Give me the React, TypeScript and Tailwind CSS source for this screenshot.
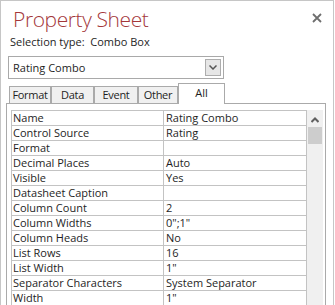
import React from "react";

const rows: [string, string][] = [
  ["Name", "Rating Combo"],
  ["Control Source", "Rating"],
  ["Format", ""],
  ["Decimal Places", "Auto"],
  ["Visible", "Yes"],
  ["Datasheet Caption", ""],
  ["Column Count", "2"],
  ["Column Widths", "0\";1\""],
  ["Column Heads", "No"],
  ["List Rows", "16"],
  ["List Width", "1\""],
  ["Separator Characters", "System Separator"],
  ["Width", "1\""],
];

const tabs = [
  { label: "Format", w: "w-[42px]" },
  { label: "Data", w: "w-[43px]" },
  { label: "Event", w: "w-[44px]" },
  { label: "Other", w: "w-[40px]" },
];

export default function App() {
  return (
    <div
      className="w-[335px] h-[305px] bg-white overflow-hidden text-[#1e1e1e]"
      style={{ fontFamily: '"Open Sans", "Noto Sans", sans-serif' }}
    >
      <div className="w-[334px] h-[320px] border border-[#c6c6c6] bg-white">
        {/* header */}
        <div className="flex items-start justify-between h-[33px]">
          <div className="ml-[12px] mt-[4px] text-[21px] leading-[28px] font-light text-[#a4373a] tracking-[-0.4px]">
            Property Sheet
          </div>
          <svg className="mr-[11px] mt-[12px]" width="10" height="10" viewBox="0 0 10 10">
            <path d="M1 1 L9 9 M9 1 L1 9" stroke="#6e6e6e" strokeWidth="1.8" />
          </svg>
        </div>
        <div className="ml-[9px] h-[22px] text-[11px] leading-[16px]">
          Selection type:&nbsp;&nbsp;Combo Box
        </div>
        {/* combo */}
        <div className="ml-[7px] w-[216px] h-[23px] border border-[#a9a9a9] flex items-center justify-between">
          <span className="ml-[4px] text-[11px] leading-[14px]">Rating Combo</span>
          <div className="mr-[2px] w-[16px] h-[17px] border border-[#adadad] bg-[#e6e6e6] flex items-center justify-center">
            <svg width="8" height="5" viewBox="0 0 8 5">
              <path d="M0.5 0.5 L4 4 L7.5 0.5" fill="none" stroke="#555" strokeWidth="1.5" />
            </svg>
          </div>
        </div>
        {/* tabs */}
        <div className="mt-[4px] ml-[8px] flex items-end h-[20px]">
          {tabs.map((t) => (
            <div
              key={t.label}
              className={`${t.w} h-[17px] border border-b-0 border-[#aaaaaa] bg-[#f0f0f0] text-[11px] leading-[16px] text-center tracking-[-0.3px] whitespace-nowrap`}
            >
              {t.label}
            </div>
          ))}
          <div className="w-[47px] h-[21px] border border-b-0 border-[#aaaaaa] bg-white text-[11px] leading-[16px] text-center relative z-10 mb-[-1px] pt-[1px]">
            All
          </div>
        </div>
        {/* tab page */}
        <div className="ml-[5px] w-[320px] h-[220px] border border-[#aaaaaa] pl-[4px] pt-[6px] flex">
          <div className="w-[296px] border-t border-l border-r border-[#c3c3c3]">
            {rows.map(([k, v]) => (
              <div key={k} className="flex h-[15px] border-b border-[#c3c3c3] text-[11px] leading-[14px]">
                <div className="w-[152px] border-r border-[#c3c3c3] pl-[1px] whitespace-nowrap overflow-hidden">
                  {k}
                </div>
                <div className="flex-1 pl-[2px] whitespace-nowrap overflow-hidden">{v}</div>
              </div>
            ))}
          </div>
          <div className="w-[16px] bg-[#f0f0f0] flex flex-col items-center">
            <svg className="mt-[7px]" width="8" height="6" viewBox="0 0 8 6">
              <path d="M0.5 5 L4 1.5 L7.5 5" fill="none" stroke="#606060" strokeWidth="2" />
            </svg>
            <div className="mt-[4px] w-[14px] h-[17px] bg-[#cdcdcd]" />
          </div>
        </div>
      </div>
    </div>
  );
}
